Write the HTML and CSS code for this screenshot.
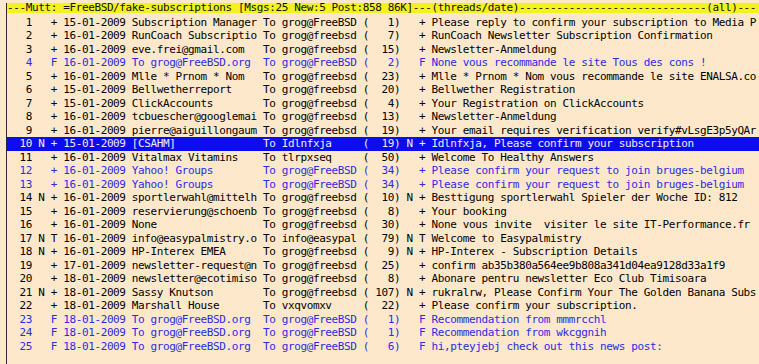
FILE: index.html
```html
<!DOCTYPE html>
<html lang="en">
<head>
    <meta charset="UTF-8">
    <meta name="viewport" content="width=device-width, initial-scale=1.0">
    <title>Mutt: =FreeBSD/fake-subscriptions</title>
    <link rel="stylesheet" href="styles.css">
</head>
<body>
    <div class="screen">
        <div class="status">---Mutt: =FreeBSD/fake-subscriptions [Msgs:25 New:5 Post:858 86K]---(threads/date)------------------------------(all)---</div>
        <div class="index">
            <div class="line">   1   + 15-01-2009 Subscription Manager To grog@FreeBSD (   1)   + Please reply to confirm your subscription to Media P</div>
            <div class="line">   2   + 16-01-2009 RunCoach Subscriptio To grog@freebsd (   7)   + RunCoach Newsletter Subscription Confirmation</div>
            <div class="line">   3   + 16-01-2009 eve.frei@gmail.com   To grog@freebsd (  15)   + Newsletter-Anmeldung</div>
            <div class="line flagged">   4   F 16-01-2009 To grog@FreeBSD.org  To grog@FreeBSD (   2)   F None vous recommande le site Tous des cons !</div>
            <div class="line">   5   + 16-01-2009 Mlle * Prnom * Nom   To grog@freebsd (  23)   + Mlle * Prnom * Nom vous recommande le site ENALSA.co</div>
            <div class="line">   6   + 15-01-2009 Bellwetherreport     To grog@freebsd (  20)   + Bellwether Registration</div>
            <div class="line">   7   + 15-01-2009 ClickAccounts        To grog@freebsd (   4)   + Your Registration on ClickAccounts</div>
            <div class="line">   8   + 16-01-2009 tcbuescher@googlemai To grog@freebsd (  13)   + Newsletter-Anmeldung</div>
            <div class="line">   9   + 16-01-2009 pierre@aiguillongaum To grog@freebsd (  19)   + Your email requires verification verify#vLsgE3p5yQAr</div>
            <div class="line current">  10 N + 15-01-2009 [CSAHM]              To Idlnfxja     (  19) N + Idlnfxja, Please confirm your subscription</div>
            <div class="line">  11   + 16-01-2009 Vitalmax Vitamins    To tlrpxseq     (  50)   + Welcome To Healthy Answers</div>
            <div class="line flagged">  12   + 16-01-2009 Yahoo! Groups        To grog@FreeBSD (  34)   + Please confirm your request to join bruges-belgium</div>
            <div class="line flagged">  13   + 16-01-2009 Yahoo! Groups        To grog@FreeBSD (  34)   + Please confirm your request to join bruges-belgium</div>
            <div class="line">  14 N + 16-01-2009 sportlerwahl@mittelh To grog@freebsd (  10) N + Besttigung sportlerwahl Spieler der Woche ID: 812</div>
            <div class="line">  15   + 16-01-2009 reservierung@schoenb To grog@freebsd (   8)   + Your booking</div>
            <div class="line">  16   + 16-01-2009 None                 To grog@freebsd (  30)   + None vous invite  visiter le site IT-Performance.fr</div>
            <div class="line">  17 N T 16-01-2009 info@easypalmistry.o To info@easypal (  79) N T Welcome to Easypalmistry</div>
            <div class="line">  18 N + 16-01-2009 HP-Interex EMEA      To grog@freebsd (   9) N + HP-Interex - Subscription Details</div>
            <div class="line">  19   + 17-01-2009 newsletter-request@n To grog@freebsd (  25)   + confirm ab35b380a564ee9b808a341d04ea9128d33a1f9</div>
            <div class="line">  20   + 18-01-2009 newsletter@ecotimiso To grog@freebsd (   8)   + Abonare pentru newsletter Eco Club Timisoara</div>
            <div class="line">  21 N + 18-01-2009 Sassy Knutson        To grog@freebsd ( 107) N + rukralrw, Please Confirm Your The Golden Banana Subs</div>
            <div class="line">  22   + 18-01-2009 Marshall House       To vxqvomxv     (  22)   + Please confirm your subscription.</div>
            <div class="line flagged">  23   F 18-01-2009 To grog@FreeBSD.org  To grog@FreeBSD (   1)   F Recommendation from mmmrcchl</div>
            <div class="line flagged">  24   F 18-01-2009 To grog@FreeBSD.org  To grog@FreeBSD (   1)   F Recommendation from wkcggnih</div>
            <div class="line flagged">  25   F 18-01-2009 To grog@FreeBSD.org  To grog@FreeBSD (   6)   F hi,pteyjebj check out this news post:</div>
        </div>
    </div>
</body>
</html>
```

FILE: styles.css
```css
body {
    margin: 0;
    padding: 0;
    background-color: #fde8cc;
    font-family: "DejaVu Sans Mono", monospace;
    font-size: 11px;
    letter-spacing: -0.38px;
    color: #000000;
    overflow: hidden;
}
.screen {
    margin-left: 6px;
    height: 362px;
    border-left: 1px solid #2b2b2b;
}
.status {
    margin-top: 3px;
    height: 10px;
    line-height: 10px;
    background-color: #f2f21e;
    color: #111111;
    white-space: pre;
}
.index {
    padding-top: 2.5px;
}
.line {
    height: 13.5px;
    line-height: 13.5px;
    white-space: pre;
    overflow: hidden;
}
.flagged {
    color: #2b2be8;
}
.current {
    background-color: #0c0cee;
    color: #ececff;
}
```
